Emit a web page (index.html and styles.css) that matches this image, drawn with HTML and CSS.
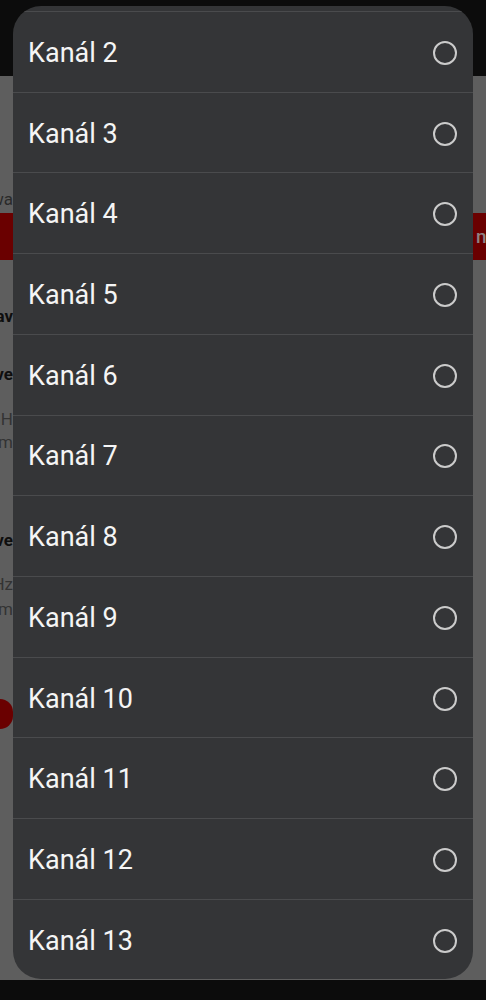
FILE: index.html
```html
<!DOCTYPE html>
<html lang="cs">
<head>
<meta charset="utf-8">
<title>Kanál</title>
<link rel="stylesheet" href="styles.css">
</head>
<body>
<div class="screen">
  <div class="statusbar"></div>
  <div class="page">
    <div class="strip strip-left">
      <div class="bgline t-wa">wa</div>
      <div class="redbtn"></div>
      <div class="bgline bold t-av">av</div>
      <div class="bgline bold t-ve1">ve</div>
      <div class="bgline light t-gh">GH</div>
      <div class="bgline light t-m1">m</div>
      <div class="bgline bold t-ve2">ve</div>
      <div class="bgline light t-hz">Hz</div>
      <div class="bgline light t-m2">m</div>
      <div class="redpill"></div>
    </div>
    <div class="strip-mid"></div>
    <div class="strip strip-right">
      <div class="redbtn redbtn-right"><span class="btntext">n</span></div>
    </div>
  </div>
  <div class="navbar"></div>

  <div class="dialog">
    <ul class="list">
      <li class="row"><span class="label">Kanál 2</span><span class="radio"></span></li>
      <li class="row"><span class="label">Kanál 3</span><span class="radio"></span></li>
      <li class="row"><span class="label">Kanál 4</span><span class="radio"></span></li>
      <li class="row"><span class="label">Kanál 5</span><span class="radio"></span></li>
      <li class="row"><span class="label">Kanál 6</span><span class="radio"></span></li>
      <li class="row"><span class="label">Kanál 7</span><span class="radio"></span></li>
      <li class="row"><span class="label">Kanál 8</span><span class="radio"></span></li>
      <li class="row"><span class="label">Kanál 9</span><span class="radio"></span></li>
      <li class="row"><span class="label">Kanál 10</span><span class="radio"></span></li>
      <li class="row"><span class="label">Kanál 11</span><span class="radio"></span></li>
      <li class="row"><span class="label">Kanál 12</span><span class="radio"></span></li>
      <li class="row"><span class="label">Kanál 13</span><span class="radio"></span></li>
    </ul>
  </div>
</div>
</body>
</html>
```

FILE: styles.css
```css
* { box-sizing: border-box; }
html, body { margin: 0; padding: 0; }
body {
  background: #0c0c0c;
  font-family: Roboto, "Noto Sans", "Liberation Sans", sans-serif;
}
.screen {
  position: relative;
  width: 486px;
  height: 1000px;
  overflow: hidden;
  display: flex;
  flex-direction: column;
}
.statusbar { height: 76px; background: #0c0c0c; flex: none; }
.navbar { height: 20px; background: #0c0c0c; flex: none; }
.page {
  flex: 1;
  background: #5e5e5e;
  display: flex;
  overflow: hidden;
}
.strip {
  width: 13px;
  flex: none;
  display: flex;
  flex-direction: column;
  overflow: hidden;
}
.strip-mid { flex: 1; }
.strip-left { align-items: flex-end; }
.bgline {
  height: 20px;
  line-height: 20px;
  font-size: 17px;
  color: #1e1e1e;
  white-space: nowrap;
  display: flex;
  justify-content: flex-end;
  width: 13px;
  flex: none;
}
.bold { font-weight: 700; color: #0e0e0e; }
.light { color: #333333; }
.t-wa { margin-top: 113px; color: #2a2a2a; }
.redbtn {
  width: 13px;
  height: 47px;
  margin-top: 4px;
  background: #6a0000;
  flex: none;
}
.t-av { margin-top: 46px; }
.t-ve1 { margin-top: 38px; }
.t-gh { margin-top: 25px; }
.t-m1 { margin-top: 3px; }
.t-ve2 { margin-top: 78px; }
.t-hz { margin-top: 24px; }
.t-m2 { margin-top: 5px; }
.redpill {
  width: 13px;
  height: 30px;
  margin-top: 80px;
  background: #6a0000;
  border-radius: 0 15px 15px 0;
  flex: none;
}
.redbtn-right {
  margin-top: 137px;
  display: flex;
  align-items: center;
  padding-left: 3px;
  overflow: hidden;
}
.btntext {
  color: #8e8383;
  font-size: 19px;
  font-weight: 500;
  white-space: nowrap;
}

.dialog {
  position: absolute;
  left: 13px;
  top: 6px;
  width: 460px;
  height: 973px;
  background: #343537;
  border-radius: 28px;
  overflow: hidden;
  padding-top: 5px;
}
.list {
  list-style: none;
  margin: 0;
  padding: 0;
}
.row {
  height: 80.73px;
  border-top: 1px solid #4a4b4d;
  display: flex;
  align-items: center;
  justify-content: space-between;
  padding: 2px 16px 0 15px;
}
.label {
  color: #f5f5f5;
  font-size: 27px;
  letter-spacing: 0;
}
.radio {
  width: 24px;
  height: 24px;
  border: 2.2px solid #cbcbcb;
  border-radius: 50%;
  flex: none;
}
```
